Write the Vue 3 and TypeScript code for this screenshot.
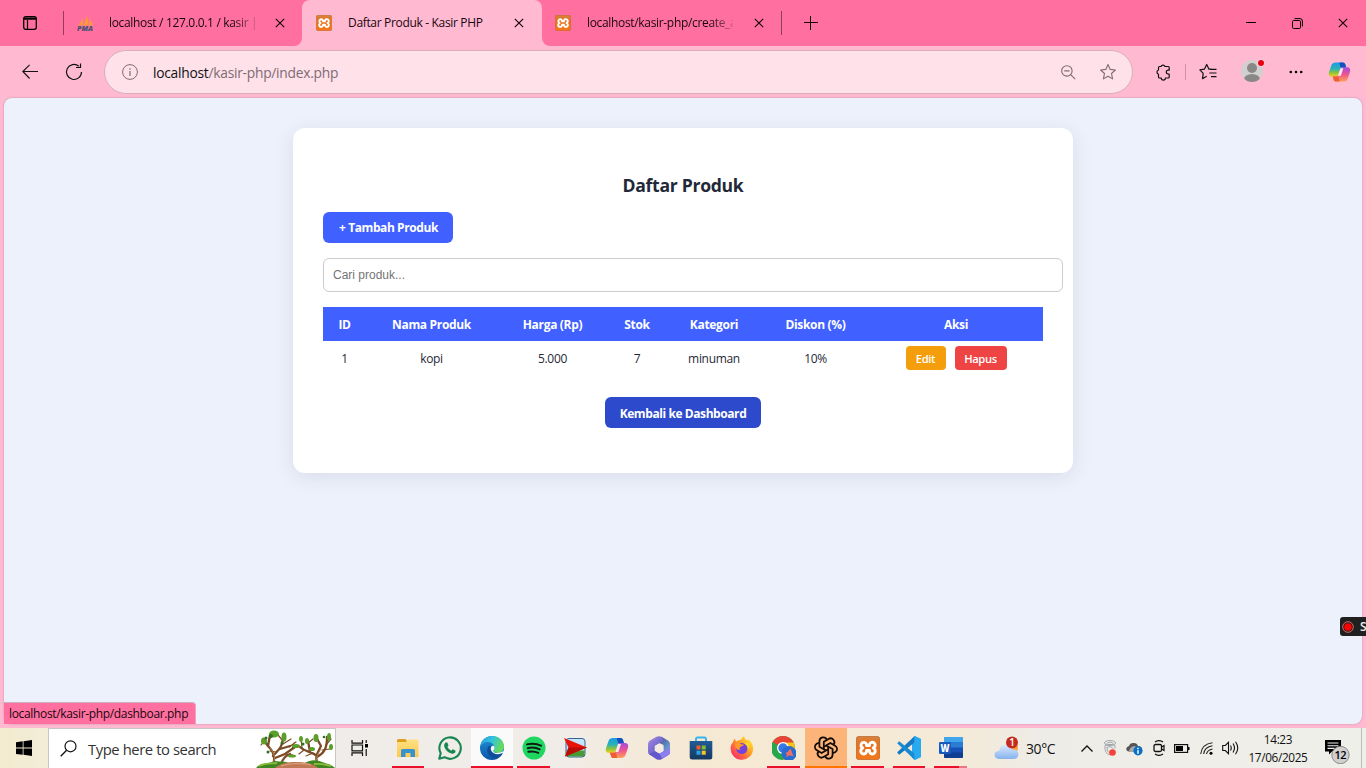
<script setup lang="ts">
import { ref } from 'vue'

interface Product {
  id: number
  nama: string
  harga: string
  stok: number
  kategori: string
  diskon: string
}

interface TaskApp {
  name: string
  state: '' | 'running' | 'active' | 'alert' | 'multi'
}

const query = ref('')
const headers: string[] = ['ID', 'Nama Produk', 'Harga (Rp)', 'Stok', 'Kategori', 'Diskon (%)', 'Aksi']
const products = ref<Product[]>([
  { id: 1, nama: 'kopi', harga: '5.000', stok: 7, kategori: 'minuman', diskon: '10%' },
])
const apps: TaskApp[] = [
  { name: 'explorer', state: 'running' },
  { name: 'whatsapp', state: '' },
  { name: 'edge', state: 'active' },
  { name: 'spotify', state: 'running' },
  { name: 'arrow', state: '' },
  { name: 'copilot', state: '' },
  { name: 'm365', state: '' },
  { name: 'store', state: '' },
  { name: 'firefox', state: '' },
  { name: 'chrome', state: 'running' },
  { name: 'gpt', state: 'alert' },
  { name: 'xampp', state: 'running' },
  { name: 'vscode', state: 'running' },
  { name: 'word', state: 'multi' },
]
</script>

<template>
  <div class="screen">
    <svg class="defs" width="0" height="0">
      <defs>
        <linearGradient id="cpA" x1="0" y1="0" x2="0" y2="1">
          <stop offset="0" stop-color="#1b9be8" /><stop offset=".45" stop-color="#2bb3b5" /><stop offset=".7" stop-color="#86c440" /><stop offset="1" stop-color="#f8cf1c" />
        </linearGradient>
        <linearGradient id="cpB" x1="0" y1="0" x2="0" y2="1">
          <stop offset="0" stop-color="#a24be0" /><stop offset=".5" stop-color="#ee5591" /><stop offset="1" stop-color="#fda253" />
        </linearGradient>
        <linearGradient id="xa" x1="0" y1="0" x2="0" y2="1">
          <stop offset="0" stop-color="#d5833d" /><stop offset=".35" stop-color="#e8721f" /><stop offset="1" stop-color="#f57818" />
        </linearGradient>
        <linearGradient id="edA" x1="0" y1="0" x2="1" y2=".4">
          <stop offset="0" stop-color="#2699df" /><stop offset=".5" stop-color="#32c3dc" /><stop offset="1" stop-color="#65da5c" />
        </linearGradient>
        <linearGradient id="edB" x1="0" y1="0" x2="0" y2="1">
          <stop offset="0" stop-color="#1f93d8" /><stop offset="1" stop-color="#0b55a8" />
        </linearGradient>
        <linearGradient id="foldG" x1="0" y1="0" x2="0" y2="1">
          <stop offset="0" stop-color="#ffe083" /><stop offset="1" stop-color="#fdc94d" />
        </linearGradient>
        <linearGradient id="ffG" x1=".85" y1=".1" x2=".15" y2=".8">
          <stop offset="0" stop-color="#ffe22e" /><stop offset=".45" stop-color="#ff9a22" /><stop offset="1" stop-color="#fb3a60" />
        </linearGradient>
        <linearGradient id="cloudG" x1="0" y1="0" x2="0" y2="1">
          <stop offset="0" stop-color="#dceafc" /><stop offset="1" stop-color="#86b2ee" />
        </linearGradient>
        <linearGradient id="mG" x1="0" y1="0" x2="1" y2="1">
          <stop offset="0" stop-color="#a88be8" /><stop offset="1" stop-color="#4c4fb8" />
        </linearGradient>
        <linearGradient id="mH" x1="0" y1="0" x2="1" y2="1">
          <stop offset="0" stop-color="#35437f" /><stop offset="1" stop-color="#7db4ea" />
        </linearGradient>
        <linearGradient id="storeG" x1="0" y1="0" x2="0" y2="1">
          <stop offset="0" stop-color="#205c95" /><stop offset="1" stop-color="#163760" />
        </linearGradient>
        <symbol id="copilot" viewBox="0 0 24 24">
          <path d="M8 2h7.4c1.600 0 2.200.9 2.700 2.300l.9 2.900h-3.100c-1.500 0-2.400.8-2.900 2.300L10.400 17H4.200C1.400 17 .3 15 .9 12.500L3.600 4.700C4.300 2.900 5.700 2 8 2z" fill="url(#cpA)" />
          <path d="M11.800 2h3.600c1.600 0 2.200.9 2.700 2.300l.9 2.900h-4.300c-1.400 0-2-.8-2.200-2z" fill="#174fbd" />
          <path d="M16 22H8.600c-1.600 0-2.200-.9-2.700-2.300L5 16.800h3.100c1.500 0 2.400-.8 2.900-2.300L13.600 7h6.200c2.800 0 3.900 2 3.300 4.500l-2.700 7.800C19.700 21.100 18.300 22 16 22z" fill="url(#cpB)" />
          <path d="M12.200 22H8.600c-1.600 0-2.200-.9-2.700-2.300L5 16.800h4.300c1.400 0 2 .8 2.200 2z" fill="#ef5d35" />
          <path d="M10.300 16 13 8h3l-2.600 8z" fill="#ffe7ee" />
        </symbol>
        <symbol id="xampp" viewBox="0 0 24 24">
          <rect x=".4" y=".4" width="23.200" height="23.200" rx="2.500" fill="url(#xa)" stroke="#b9642a" stroke-width=".8" />
          <path d="M8 6.400a2.900 2.900 0 0 0-2.300 4.800L6.800 12l-1.100.9A2.900 2.900 0 1 0 10.400 16l.2-1.500h2.800l.2 1.500a2.900 2.900 0 1 0 4.700-3.100L17.200 12l1.100-.8A2.900 2.900 0 1 0 13.600 8l-.2 1.500h-2.800L10.400 8A2.900 2.900 0 0 0 8 6.400z" fill="none" stroke="#fff" stroke-width="2.900" stroke-linejoin="round" />
        </symbol>
        <symbol id="star" viewBox="0 0 18 18">
          <path d="M9 1.600 11.200 6.400 16.400 7 12.500 10.500 13.600 15.900 9 13.200 4.400 15.900 5.500 10.500 1.600 7 6.800 6.400z" fill="none" stroke="currentColor" stroke-width="1.100" stroke-linejoin="round" />
        </symbol>
        <symbol id="close" viewBox="0 0 10 10">
          <path d="M.8.8l8.400 8.400M9.200.8.800 9.200" stroke="#19040c" stroke-width="1.200" />
        </symbol>
      </defs>
    </svg>

    <header class="tabbar">
      <div class="workspace">
        <svg width="14" height="14" viewBox="0 0 14 14"><rect x=".7" y=".7" width="12.600" height="12.600" rx="2" fill="none" stroke="#000" stroke-width="1.300" /><path d="M1 2.200h12M1 3.200h12M4.500 4v9" stroke="#000" stroke-width="1.200" /></svg>
      </div>
      <div class="tab tab-first">
        <svg class="fav" width="18" height="16" viewBox="0 0 18 16">
          <path d="M1 10.500C3.500 8.500 5 5.500 5.300 2.500c1 3 .8 6-.2 8zM6 10.500C8.500 7 9.500 4 9.200.5c2 3 2.500 7 1.500 10zM11.800 10.500c.9-2 .9-4 .4-6.500 2.200 2 3.200 4.300 3.500 6.500z" fill="#fa9d32" />
          <text x="0" y="15.700" textLength="16" lengthAdjust="spacingAndGlyphs" class="pma">PMA</text>
        </svg>
        <span class="title faded">localhost / 127.0.0.1 / kasir |</span>
        <svg class="x" width="10" height="10"><use href="#close" /></svg>
      </div>
      <div class="tab tab-active">
        <svg class="fav" width="16" height="16"><use href="#xampp" /></svg>
        <span class="title">Daftar Produk - Kasir PHP</span>
        <svg class="x" width="10" height="10"><use href="#close" /></svg>
      </div>
      <div class="tab tab-last">
        <svg class="fav" width="16" height="16"><use href="#xampp" /></svg>
        <span class="title faded">localhost/kasir-php/create_a</span>
        <svg class="x" width="10" height="10"><use href="#close" /></svg>
      </div>
      <svg class="plus" width="14" height="14" viewBox="0 0 14 14"><path d="M6.500 0v14M0 6.500h14" stroke="#16040b" /></svg>
      <div class="wincontrols">
        <svg width="10" height="10" viewBox="0 0 10 10"><path d="M0 4.500h10" stroke="#000" /></svg>
        <svg width="11" height="11" viewBox="0 0 11 11"><rect x=".5" y="2.500" width="8" height="8" rx="1.200" fill="none" stroke="#000" /><path d="M2.500.6h5.500a2.400 2.400 0 0 1 2.400 2.400v5.500" fill="none" stroke="#000" /></svg>
        <svg width="10" height="10"><use href="#close" /></svg>
      </div>
    </header>

    <div class="toolbar">
      <svg class="back" width="16" height="16" viewBox="0 0 16 16"><path d="M16 7.500H.8M7.600.8.8 7.500l6.800 7" fill="none" stroke="#111" stroke-width="1.100" /></svg>
      <svg class="reload" width="18" height="18" viewBox="0 0 18 18"><path d="M16.500 9A7.500 7.500 0 1 1 13.800 3.200M11 4.500h4.500V.5" fill="none" stroke="#111" stroke-width="1.200" /></svg>
      <div class="address">
        <svg class="info" width="16" height="16" viewBox="0 0 16 16"><circle cx="8" cy="8" r="7.400" fill="none" stroke="#7d6c73" /><path d="M8 7v5M8 4.200v1.500" stroke="#7d6c73" stroke-width="1.200" /></svg>
        <span class="url"><b>localhost</b>/kasir-php/index.php</span>
        <svg class="zoomout" width="15" height="15" viewBox="0 0 15 15"><circle cx="5.900" cy="5.900" r="5.200" fill="none" stroke="#7d6c73" stroke-width="1.100" /><path d="M9.700 9.700 14.200 14.200M3.300 5.900h5.200" stroke="#7d6c73" stroke-width="1.100" /></svg>
        <svg class="fave" width="18" height="18"><use href="#star" /></svg>
      </div>
      <svg class="ext" width="16" height="18" viewBox="0 0 16 18"><path d="M4.500 3.500H6a2.100 2.100 0 0 1 4 0h3.200q1 0 1 1v2.700h-1a1.900 1.900 0 0 0 0 3.800h1v3q0 1-1 1H10.500a2.100 2.100 0 0 1-4.200 0H4.500q-1 0-1-1v-2.800a2.200 2.200 0 0 1 0-4.200V4.500q0-1 1-1z" fill="none" stroke="#111" stroke-width="1.200" stroke-linejoin="round" /></svg>
      <i class="sep"></i>
      <svg class="collections" width="18" height="18" viewBox="0 0 18 18"><path d="M12.600 6.200H10L7.700 1.500 5.400 6.200.9 6.900 4.200 10.300 3.500 15.700 7.700 13.200M11.500 6.300H17.500M10.300 10H17.500M12 13.700H17.500" fill="none" stroke="#111" stroke-width="1.200" stroke-linejoin="round" /></svg>
      <svg class="profile" width="26" height="26" viewBox="0 0 26 26"><defs><clipPath id="pc"><circle cx="12" cy="14" r="11" /></clipPath></defs><circle cx="12" cy="14" r="11" fill="#d2d0ce" /><g clip-path="url(#pc)" fill="#8a8886"><circle cx="12" cy="11" r="5" /><ellipse cx="12" cy="22.500" rx="8" ry="5.500" /></g><circle cx="21" cy="6" r="3.800" fill="#ffd6e2" /><circle cx="21" cy="6" r="3" fill="#e60012" /></svg>
      <svg class="more" width="14" height="4" viewBox="0 0 14 4"><circle cx="1.800" cy="2" r="1.300" /><circle cx="7" cy="2" r="1.300" /><circle cx="12.200" cy="2" r="1.300" /></svg>
      <svg class="cop" width="23" height="24"><use href="#copilot" /></svg>
    </div>

    <main class="viewport">
      <section class="card">
        <h2>Daftar Produk</h2>
        <a class="btn add">+ Tambah Produk</a>
        <input v-model="query" class="search" type="text" placeholder="Cari produk..." />
        <table>
          <colgroup><col v-for="(h, i) in headers" :key="h" :class="'c' + i" /></colgroup>
          <thead><tr><th v-for="h in headers" :key="h">{{ h }}</th></tr></thead>
          <tbody>
            <tr v-for="p in products" :key="p.id">
              <td>{{ p.id }}</td><td>{{ p.nama }}</td><td>{{ p.harga }}</td><td>{{ p.stok }}</td><td>{{ p.kategori }}</td><td>{{ p.diskon }}</td>
              <td><div class="actions"><a class="edit">Edit</a><a class="hapus">Hapus</a></div></td>
            </tr>
          </tbody>
        </table>
        <a class="btn home">Kembali ke Dashboard</a>
      </section>
    </main>
    <div class="status"><span>localhost/kasir-php/dashboar.php</span></div>
    <div class="recorder"><svg width="12" height="12" viewBox="0 0 12 12"><circle cx="6" cy="6" r="5.300" fill="none" stroke="#d66" /><circle cx="6" cy="6" r="3.800" fill="#f00" /></svg><span>S</span></div>

    <footer class="taskbar">
      <div class="start"><svg width="16" height="16" viewBox="0 0 16 16"><path d="M0 2.200 6.700 1.300V7.600H0zM7.500 1.200 16 0v7.600H7.500zM0 8.400h6.700v6.400L0 13.900zM7.500 8.400H16V16l-8.500-1.200z" /></svg></div>
      <div class="searchbox">
        <svg class="mag" width="17" height="17" viewBox="0 0 17 17"><circle cx="10.500" cy="6.300" r="5.500" fill="none" stroke="#111" stroke-width="1.200" /><path d="M6.600 10.200.7 16.200" stroke="#111" stroke-width="1.300" /></svg>
        <span>Type here to search</span>
        <svg class="trees" width="79" height="39" viewBox="0 0 79 39">
          <g fill="none" stroke="#7a4a26" stroke-linecap="round">
            <path d="M17 36C20 28 17 22 12 17M17 27C22 21 26 19 27 10M24 20 34 17M19 29 29 25 39 18M12 17 7 10M12 17 14 6" stroke-width="2.300" />
            <path d="M62 36C58 28 62 23 65 17M61 27C55 22 49 23 44 18M61 28C68 24 71 20 71 8M54 23 52 12M65 17 60 8M25 36c1-6 4-9 9-11" stroke-width="2.300" />
            <path d="M8 12 5 16M27 12 22 6M33 18 40 13M29 25 37 26M46 19 45 9M52 14 57 10M70 16 75 10M66 21 74 20M14 9 19 5M36 20l2-6M48 21l-5 4M27 15 35 10M20 23 14 22M57 24 50 27" stroke-width="1.200" />
          </g>
          <path d="M17 35C20 28 18 23 14 19M62 35C59 28 62 25 65 20" fill="none" stroke="#b78650" />
          <g fill="#5b9e29"><ellipse cx="18" cy="5" rx="5" ry="3.500" /><ellipse cx="8" cy="12" rx="3" ry="3.500" /><ellipse cx="28" cy="8" rx="2.500" ry="4.500" /><ellipse cx="40" cy="17" rx="4" ry="2" /><ellipse cx="45" cy="10" rx="2" ry="3" /><ellipse cx="51" cy="12" rx="2" ry="3" /><ellipse cx="60" cy="9" rx="2.500" ry="4" /><ellipse cx="73" cy="8" rx="2" ry="4" /><ellipse cx="75" cy="18" rx="2" ry="3" /><ellipse cx="36" cy="27" rx="4" ry="1.500" /><ellipse cx="56" cy="20" rx="3" ry="2" /></g>
          <g fill="#2d721e"><circle cx="15" cy="7" r="2" /><circle cx="10" cy="9" r="1.500" /><circle cx="26" cy="14" r="1.500" /><circle cx="47" cy="15" r="1.500" /><circle cx="68" cy="8" r="1.300" /><circle cx="12" cy="23" r="1.500" /></g>
          <path d="M0 39C5 33 14 35 19 32c6 1 10 0 14 2h16c6-4 12-3 17-1 5 2 9 2 13 6z" fill="#3f8623" />
          <path d="M3 37c7-4 13-2 18-3M58 35c8-1 12 1 17 2" stroke="#8bbd3c" stroke-width="1.800" fill="none" />
          <path d="M19 39c5-5 12-6 21-6s17 1 22 6z" fill="#bf7954" /><path d="M25 37c8-3 22-3 30-1" stroke="#d69b78" stroke-width="1.500" fill="none" />
        </svg>
      </div>
      <div class="taskview"><svg width="18" height="16" viewBox="0 0 18 16"><path d="M1 0v3.200h10.500V0M1 16v-3.200h10.500V16M1 5h10.500v5.800H1zM15.200 0v3M15.200 9v7" fill="none" stroke="#111" stroke-width="1.200" /><rect x="14" y="4" width="3" height="3.500" /></svg></div>

      <div class="apps">
        <div v-for="a in apps" :key="a.name" class="app" :class="a.state">
          <svg width="24" height="24" viewBox="0 0 24 24">
            <template v-if="a.name === 'explorer'">
              <path d="M1 4.500q0-1.500 1.500-1.500h7L11 5h11v6H1z" fill="#dda018" /><path d="M1 7q0-1 1-1h8l2-2.500h9.500q1 0 1 1V21h-21.500z" fill="url(#foldG)" /><path d="M5 21v-6.500q0-1.500 1.500-1.500h11q1.500 0 1.500 1.500V21h-4.500v-4h-5v4z" fill="#3a91cf" />
            </template>
            <template v-else-if="a.name === 'whatsapp'">
              <path d="M2.700 17.200A10.700 10.700 0 1 1 6.500 21.200L1.200 22.700z" fill="none" stroke="#178653" stroke-width="2.100" stroke-linejoin="round" /><path d="M7.500 6.500 9.300 6.500 10.500 9.400 9.400 11q1.300 2.600 3.900 3.700l1.300-1.400 2.800 1.300v1.700q-1.500 2-4 1.300Q8 16 6.200 10.500 5.700 8 7.500 6.500z" fill="#178653" />
            </template>
            <template v-else-if="a.name === 'edge'">
              <circle cx="12" cy="12" r="12" fill="url(#edB)" />
              <path d="M.2 11C1 4.500 6 0 12 0c7 0 12 5 12 10.500 0 4-3 6.500-6.500 6.500-2.500 0-4.500-.8-4.500-2 0-.8 1.500-1.500 1.500-3.500C14.500 8 11 6 7.500 6 4 6 1.500 8 .2 11z" fill="url(#edA)" />
              <path d="M9.500 9.500C6 12 6.500 18 11 21c4 2.500 8.500 1 11-3 .5-.8-.3-1-.8-.7C15 20 9 15 11.800 11z" fill="#104d98" />
              <path d="M13.200 15c0-1 1.400-1.300 1.400-3.500 0-1.800-2.200-2.300-3.200-1-1.400 2-.4 5 2 6.500 2.800 1.600 5.800 1.500 8.300.2l2.300-1.700v3l-1-.7c.2-.7-.5-.7-1-.5l2.500-3.300c-3 3.600-11.300 4-11.300 1z" fill="#f5fafc" />
            </template>
            <template v-else-if="a.name === 'spotify'">
              <circle cx="12" cy="12" r="11.500" fill="#1fd760" /><path d="M5 8.400q7.500-2 14 1.300M5.700 12.200q6.500-1.700 12 1.200M6.300 15.800q5.400-1.200 10 1" fill="none" stroke="#101b13" stroke-width="2" stroke-linecap="round" />
            </template>
            <template v-else-if="a.name === 'arrow'">
              <rect x="3" y="2.500" width="19" height="18.500" rx="3" fill="#c6e5fa" stroke="#326599" /><path d="M3.500 14.500h18v4q0 2-2 2h-14q-2 0-2-2z" fill="#479a35" /><path d="M1 2 24 11.500 2 20.500 5.500 11.500z" fill="#e71507" /><path d="M5.500 11.500H24L2 20.500z" fill="#b90d05" />
            </template>
            <use v-else-if="a.name === 'copilot'" href="#copilot" />
            <template v-else-if="a.name === 'm365'">
              <path d="M14.500.8 21 4.500q2 1.200 2 3.300v7.500l-6.500 2.500V9L9 5.500z" fill="url(#mH)" />
              <path d="M14.500.8Q12-.5 9.500.8L3 4.500Q1 5.700 1 8v8q0 2 2 3l5-2.500V10l7.500-4.500 1-3z" fill="url(#mG)" />
              <path d="M2 18.300 8.500 15l4 2.500 10.500-5.500v4q0 2.200-2 3.300l-6.500 3.900q-2.500 1.300-5 0z" fill="#6257cb" />
              <path d="M12.500 17.500 23 12v4q0 2.200-2 3.300l-6 3.500z" fill="#8d7ff0" />
              <path d="m12 7.500 4.300 2.400v4.800L12 17.200l-4.300-2.500V9.900z" fill="#f3ece2" />
            </template>
            <template v-else-if="a.name === 'store'">
              <path d="M7 5V3q0-1.500 1.500-1.500h7Q17 1.500 17 3v2" fill="none" stroke="#35b4ef" stroke-width="1.900" /><path d="M.7 5h22.600v16q0 2.500-2.500 2.500H3.200Q.7 23.500.7 21z" fill="url(#storeG)" /><path d="M7.500 9.500h4v4h-4z" fill="#f15a29" /><path d="M12.700 9.500h4v4h-4z" fill="#7fbd2a" /><path d="M7.500 14.700h4v4h-4z" fill="#25a5e8" /><path d="M12.700 14.700h4v4h-4z" fill="#fec321" />
            </template>
            <template v-else-if="a.name === 'firefox'">
              <path d="M3 6Q3.500 3.500 5 2.500 5 4.500 6.500 5.500q2-2 4.500-1.800Q11.500 1.800 14 .3q.5 2.700 3.200 4.500Q18 4 17.800 3q5.500 4 5.400 10A11.300 11.300 0 0 1 .6 12Q.7 8.500 3 6z" fill="url(#ffG)" />
              <circle cx="11.800" cy="12.500" r="5.600" fill="#7543d9" />
              <path d="M5 7q3.500-1.400 5.500 1l3.700.8q-1.500 1.700-3.700 2-2 2.200 0 3.200-3 .5-5-2.500z" fill="#ff9927" /><path d="M14 7.500q4.500 2 4 6.500 3-4 .5-8z" fill="#ffd62b" />
            </template>
            <template v-else-if="a.name === 'chrome'">
              <g transform="translate(-1)"><circle cx="12" cy="12" r="12" fill="#29a64b" /><path d="M12 12 1.600 6A12 12 0 0 1 22.400 6z" fill="#e84335" /><path d="M12 6.500H22.600A12 12 0 0 1 12 24l5-9z" fill="#fbc116" /><circle cx="12" cy="12" r="6" fill="#fff" /><circle cx="12" cy="12" r="4.700" fill="#3a79e5" /></g><circle cx="17" cy="17.500" r="7.500" fill="#2a6bd0" /><path d="m18.500 12.500 3 8-4-1.300-3.500 2 1-3.200-2-.8q3-.7 5.500-4.700z" fill="#f06e62" />
            </template>
            <g v-else-if="a.name === 'gpt'" transform="translate(-1.200 -1.200) scale(1.100)" fill="none" stroke="#120d09" stroke-width="1.600" stroke-linejoin="round">
              <path d="M11.217 19.384a3.501 3.501 0 0 0 6.783-1.217v-5.167l-6-3.350" />
              <path d="M5.214 15.014a3.501 3.501 0 0 0 4.446 5.266l4.340-2.534v-6.946" />
              <path d="M6 7.630c-1.391-.236-2.787.395-3.534 1.689a3.474 3.474 0 0 0 1.271 4.745l4.263 2.514l6-3.348" />
              <path d="M12.783 4.616a3.501 3.501 0 0 0-6.783 1.217v5.067l6 3.450" />
              <path d="M18.786 8.986a3.501 3.501 0 0 0-4.446-5.266l-4.340 2.534v6.946" />
              <path d="M18 16.302c1.391.236 2.787-.395 3.534-1.689a3.474 3.474 0 0 0-1.271-4.745l-4.308-2.514l-5.955 3.420" />
            </g>
            <use v-else-if="a.name === 'xampp'" href="#xampp" />
            <template v-else-if="a.name === 'vscode'">
              <path d="M17.500 0 24 3v18l-6.500 3L15 21.500V2.500z" fill="#29a9ef" /><path d="M17.500.2 1 15.500l-.8 1.300 2 2L17.500 6.500z" fill="#137bc5" /><path d="M17.500 23.800.2 7.200l2-2L17.500 17.500z" fill="#198bd1" /><path d="M17.500 0 24 3v18l-6.500 3z" fill="#29a9ef" />
            </template>
            <template v-else>
              <rect x="5" y="1" width="19" height="21" rx="1.500" fill="#1851b5" /><path d="M5 2.500Q5 1 6.500 1h16Q24 1 24 2.500v4H5z" fill="#41a5ee" /><path d="M5 6.500h19v5H5z" fill="#2b7cd3" /><path d="M5 16.500h19v4q0 1.500-1.500 1.500h-16Q5 22 5 20.500z" fill="#103f91" /><rect x="0" y="6" width="12" height="12" rx="1" fill="#185abd" /><text x="1.500" y="15.500" class="w" textLength="9" lengthAdjust="spacingAndGlyphs">W</text>
            </template>
          </svg>
        </div>
      </div>

      <div class="weather">
        <svg width="26" height="25" viewBox="0 0 26 25"><circle cx="18.500" cy="12" r="5.500" fill="#f6a23a" /><path d="M5 23q-4.500-.5-4.500-4 0-4 4.500-4 1-6.500 7-6.500 5.500 0 7 5 5.500 0 5.500 5Q24 23 19.500 23z" fill="url(#cloudG)" /><circle cx="18" cy="6.500" r="6" fill="#c42b1c" /><text x="15.200" y="10" class="one">1</text></svg>
        <span>30°C</span>
      </div>
      <div class="tray">
        <svg width="12" height="7" viewBox="0 0 12 7"><path d="M.5 6.500 6 1l5.500 5.500" fill="none" stroke="#111" stroke-width="1.300" /></svg>
        <svg width="14" height="16" viewBox="0 0 14 16"><g fill="none" stroke="#9ba1a8" stroke-width=".9"><ellipse cx="7" cy="3" rx="5.500" ry="2.500" /><ellipse cx="7" cy="3.500" rx="3" ry="1.300" /><path d="M2 5.500q5-2.500 10 0v3M3.500 7.500q3.500-2.500 7 1M2 5.500q-1 9 6 9.500M4 7.500q-.5 4.500 3 5.500" /></g><circle cx="9.500" cy="12.500" r="3.300" fill="#f4413a" /></svg>
        <svg width="17" height="15" viewBox="0 0 17 15"><path d="M3 10.500q-3-.5-2.700-3Q.5 5.500 3 5 4 1.500 8 2q3 0 4 3 3.500 0 4 3l-1 2.500z" fill="#555" /><path d="M3 10q1-4 5-5l5 2-5 4z" fill="#a5a9ab" /><circle cx="12" cy="9.800" r="4.600" fill="#086fc6" /><path d="M12 9.200v3.500M12 6.700v1.500" stroke="#fff" stroke-width="1.500" /></svg>
        <svg width="12" height="16" viewBox="0 0 12 16"><path d="M2 2Q6-.8 10 2M2 14q4 2.800 8 0M8.500 7 11 5.500v5L8.500 9" fill="none" stroke="#111" stroke-width="1.200" /><rect x="1" y="4.500" width="7.500" height="7" rx="1.500" fill="none" stroke="#111" stroke-width="1.300" /></svg>
        <svg width="16" height="9" viewBox="0 0 16 9"><rect x=".6" y=".6" width="13" height="7.800" fill="none" stroke="#111" stroke-width="1.200" /><path d="M2 2h7v5H2zM14 3h1.500v3H14z" /></svg>
        <svg width="13" height="13" viewBox="0 0 13 13"><g fill="none" stroke="#222" stroke-width="1.100"><path d="M.7 12Q2 2 12.500.8M3.700 12Q4.500 5 12.500 3.800M6.500 12q.8-4 6-5" /></g><circle cx="11" cy="11.300" r="1.500" /></svg>
        <svg width="17" height="14" viewBox="0 0 17 14"><path d="M.7 4.500h2.600L6.500 1.300v11.400L3.300 9.500H.7zM8.500 4.500q1.500 2.500 0 5M11 2.500q3 4.500 0 9M13.500.8q4.500 6.200 0 12.400" fill="none" stroke="#111" stroke-width="1.100" /></svg>
      </div>
      <div class="clock"><span>14:23</span><span>17/06/2025</span></div>
      <div class="notif">
        <svg width="26" height="26" viewBox="0 0 26 26"><path d="M0 2h16v11.500H7L4 16.500v-3H0z" /><path d="M2.500 5h11M2.500 7.700h11M2.500 10.400h7" stroke="#eee" stroke-width="1.100" /><circle cx="15.500" cy="17" r="8.700" fill="#d0cfcd" stroke="#777" stroke-width=".8" /><text x="9.500" y="21.300" textLength="12" class="count">12</text></svg>
      </div>
    </footer>
  </div>
</template>

<style>
body { margin: 0; overflow: hidden; }
</style>

<style scoped>
* { box-sizing: border-box; }
.screen { position: relative; width: 1366px; height: 768px; overflow: hidden; display: flex; flex-direction: column; background: #ffbad2; font-family: "Open Sans", "Noto Sans", sans-serif; color: #111; }
svg { display: block; flex: none; }
.defs { position: absolute; }
span { white-space: nowrap; }
.tabbar { height: 46px; flex: none; display: flex; align-items: center; background: linear-gradient(to right, #ff70a0 0 290px, #ffbad2 290px 552px, #ff70a0 552px); }
.workspace { width: 63px; padding-left: 23px; }
.tab { display: flex; align-items: center; height: 46px; font-size: 12px; letter-spacing: -.33px; color: #19060d; }
.tab .title { overflow: hidden; padding-bottom: 1px; }
.tab .x { margin-left: auto; }
.tab-first { width: 239px; padding: 0 17px 0 14px; background: #ff70a0; border-radius: 0 0 8px 0; }
.tab-first::before { content: ""; width: 1px; height: 24px; background: #8e3f5a; margin-left: -14px; margin-right: 13px; }
.tab-first .title { margin-left: 14px; width: 147px; }
.tab-active { width: 240px; padding: 0 18px 0 14px; background: #ffbad2; border-radius: 8px 8px 0 0; box-shadow: 0 -10px 0 #ff70a0; }
.tab-active .title { margin-left: 16px; }
.tab-last { width: 239px; padding: 0 17px 0 13px; background: #ff70a0; border-radius: 0 0 0 8px; }
.tab-last .title { margin-left: 16px; width: 146px; }
.tab-last::after { content: ""; width: 1px; height: 24px; background: #8e3f5a; margin-left: 17px; margin-right: -18px; }
.faded { -webkit-mask-image: linear-gradient(to right, #000 84%, transparent 104%); mask-image: linear-gradient(to right, #000 84%, transparent 104%); }
.plus { margin-left: 23px; }
.wincontrols { display: flex; align-items: center; gap: 35.500px; margin-left: auto; padding-right: 18px; }
.pma { font: italic 900 7px "Open Sans"; fill: #4d526f; letter-spacing: 0; }
.toolbar { height: 52px; flex: none; display: flex; align-items: center; background: #ffbad2; padding-left: 22px; }
.reload { margin-left: 27px; }
.address { width: 1029px; height: 44px; margin-left: 21px; border: 1px solid #d9aebc; border-radius: 22px; background: #ffe1ea; display: flex; align-items: center; padding: 0 15px 0 17px; color: #7d6c73; }
.url { margin-left: 15px; font-size: 13.800px; letter-spacing: -.26px; color: #7d6c73; }
.url b { font-weight: 400; color: #111; }
.zoomout { margin-left: auto; }
.fave { margin-left: 23px; }
.ext { margin-left: 22px; }
.sep { width: 1px; height: 16px; background: #cf91a8; margin-left: 14px; }
.collections { margin-left: 13px; }
.profile { margin-left: 23px; margin-bottom: 4px; }
.more { margin-left: 23px; }
.cop { margin-left: 25px; }
.viewport { height: 626px; flex: none; margin: 0 4px; background: #edf1fb; border-radius: 8px; overflow: hidden; padding-top: 30px; box-shadow: 0 0 2px #b8899b; }
.card { width: 780px; height: 345px; margin: 0 auto; background: #fff; border-radius: 12px; padding: 45px 30px; display: flex; flex-direction: column; align-items: flex-start; box-shadow: 0 4px 20px rgba(30, 50, 90, .1); color: #1f2937; }
h2 { align-self: center; margin: 0; font-size: 17.600px; letter-spacing: -.3px; line-height: 25px; font-weight: 700; }
.btn { color: #fff; font-size: 12px; letter-spacing: -.42px; font-weight: 700; border-radius: 6px; height: 31px; line-height: 31px; text-align: center; white-space: nowrap; }
.add { width: 130px; margin-top: 14px; background: #4060ff; padding-left: 1px; }
.search { width: 740px; height: 34px; flex: none; margin: 15px 0; border: 1px solid #ccc; border-radius: 6px; padding: 0 9px; font: 12px "Liberation Sans", Arial, sans-serif; background: #fff; outline: none; }
.search::placeholder { color: #757575; }
table { width: 720px; table-layout: fixed; border-collapse: collapse; font-size: 12px; letter-spacing: -.32px; text-align: center; }
.c0 { width: 43px; } .c1 { width: 131px; } .c2 { width: 111px; } .c3 { width: 58px; } .c4 { width: 96px; } .c5 { width: 107px; } .c6 { width: 174px; }
th { height: 34px; padding: 0; background: #4060ff; color: #fff; font-weight: 700; white-space: nowrap; }
td { height: 34px; padding: 0; }
.actions { display: flex; justify-content: center; gap: 9px; }
.actions a { height: 24px; line-height: 25px; border-radius: 4px; color: #fff; font-weight: 600; font-size: 11.200px; letter-spacing: -.35px; }
.edit { width: 40px; background: #f59e0b; }
.hapus { width: 52px; background: #ef4444; }
.home { align-self: center; width: 156px; margin-top: 22px; background: #2d49cc; line-height: 33px; }
.status { position: absolute; left: 4px; top: 702px; width: 192px; height: 22px; background: #ff70a0; border-top: 1px solid #c9b3c3; border-right: 1px solid #e9a3bd; border-radius: 0 4px 0 0; font-size: 12px; letter-spacing: -.34px; line-height: 22px; padding-left: 5px; color: #19060d; }
.recorder { position: absolute; left: 1340px; top: 617px; width: 26px; height: 19px; background: #202020; border-radius: 3px 0 0 3px; display: flex; align-items: center; padding-left: 2px; gap: 6px; color: #eee; font-size: 12px; font-weight: 600; overflow: hidden; }
.taskbar { height: 40px; flex: none; margin-top: 4px; display: flex; align-items: stretch; background: linear-gradient(to right, #f3ebcf 0, #f3ecd8 48px, #f0ece9 340px, #f0ece7 560px, #f6e9d3 690px, #f4ead7 960px, #eeece7 1040px, #efefea 1366px); }
.start { width: 48px; padding-left: 16px; display: flex; align-items: center; }
.searchbox { width: 288px; background: #fff; border: 1px solid #c8c7c4; border-bottom: 0; display: flex; align-items: center; padding-left: 11px; color: #333; font-size: 14.800px; letter-spacing: -.42px; }
.searchbox span { margin-left: 11px; }
.trees { margin-left: auto; }
.taskview { width: 51.500px; padding-left: 15px; display: flex; align-items: center; }
.apps { display: flex; width: 584.500px; flex: none; }
.app { flex: 1; display: flex; align-items: center; justify-content: center; padding-bottom: 0; position: relative; }
.app.running::after, .app.multi::after, .app.active::after, .app.alert::after { content: ""; position: absolute; bottom: 0; left: 4px; right: 5px; height: 2px; background: #ea1029; }
.app.active { background: #fafafa; }
.app.active::after { left: 0; right: 0; }
.app.alert { background: #fdb478; }
.app.alert::after { left: 0; right: 0; background: #ff7500; }
.app.multi::after { background: linear-gradient(to right, #ea1029 75%, #ed7588 75%); }
.w { font: 800 10px "Open Sans"; fill: #fff; }
.one { font: 600 10px "Open Sans"; fill: #fff; }
.weather { display: flex; align-items: center; margin-left: 22px; width: 87px; flex: none; font-size: 14px; letter-spacing: -.4px; gap: 6px; }
.tray { display: flex; align-items: center; gap: 9.500px; width: 160px; flex: none; }
.clock { width: 62px; flex: none; margin-left: 6px; display: flex; flex-direction: column; align-items: center; justify-content: center; font-size: 11.800px; letter-spacing: -.36px; line-height: 18px; padding-bottom: 1px; }
.notif { margin-left: auto; width: 37px; padding-top: 10px; border-right: 1px solid #bbb; margin-right: 4px; }
.count { font: 600 11px "Open Sans"; }
</style>
